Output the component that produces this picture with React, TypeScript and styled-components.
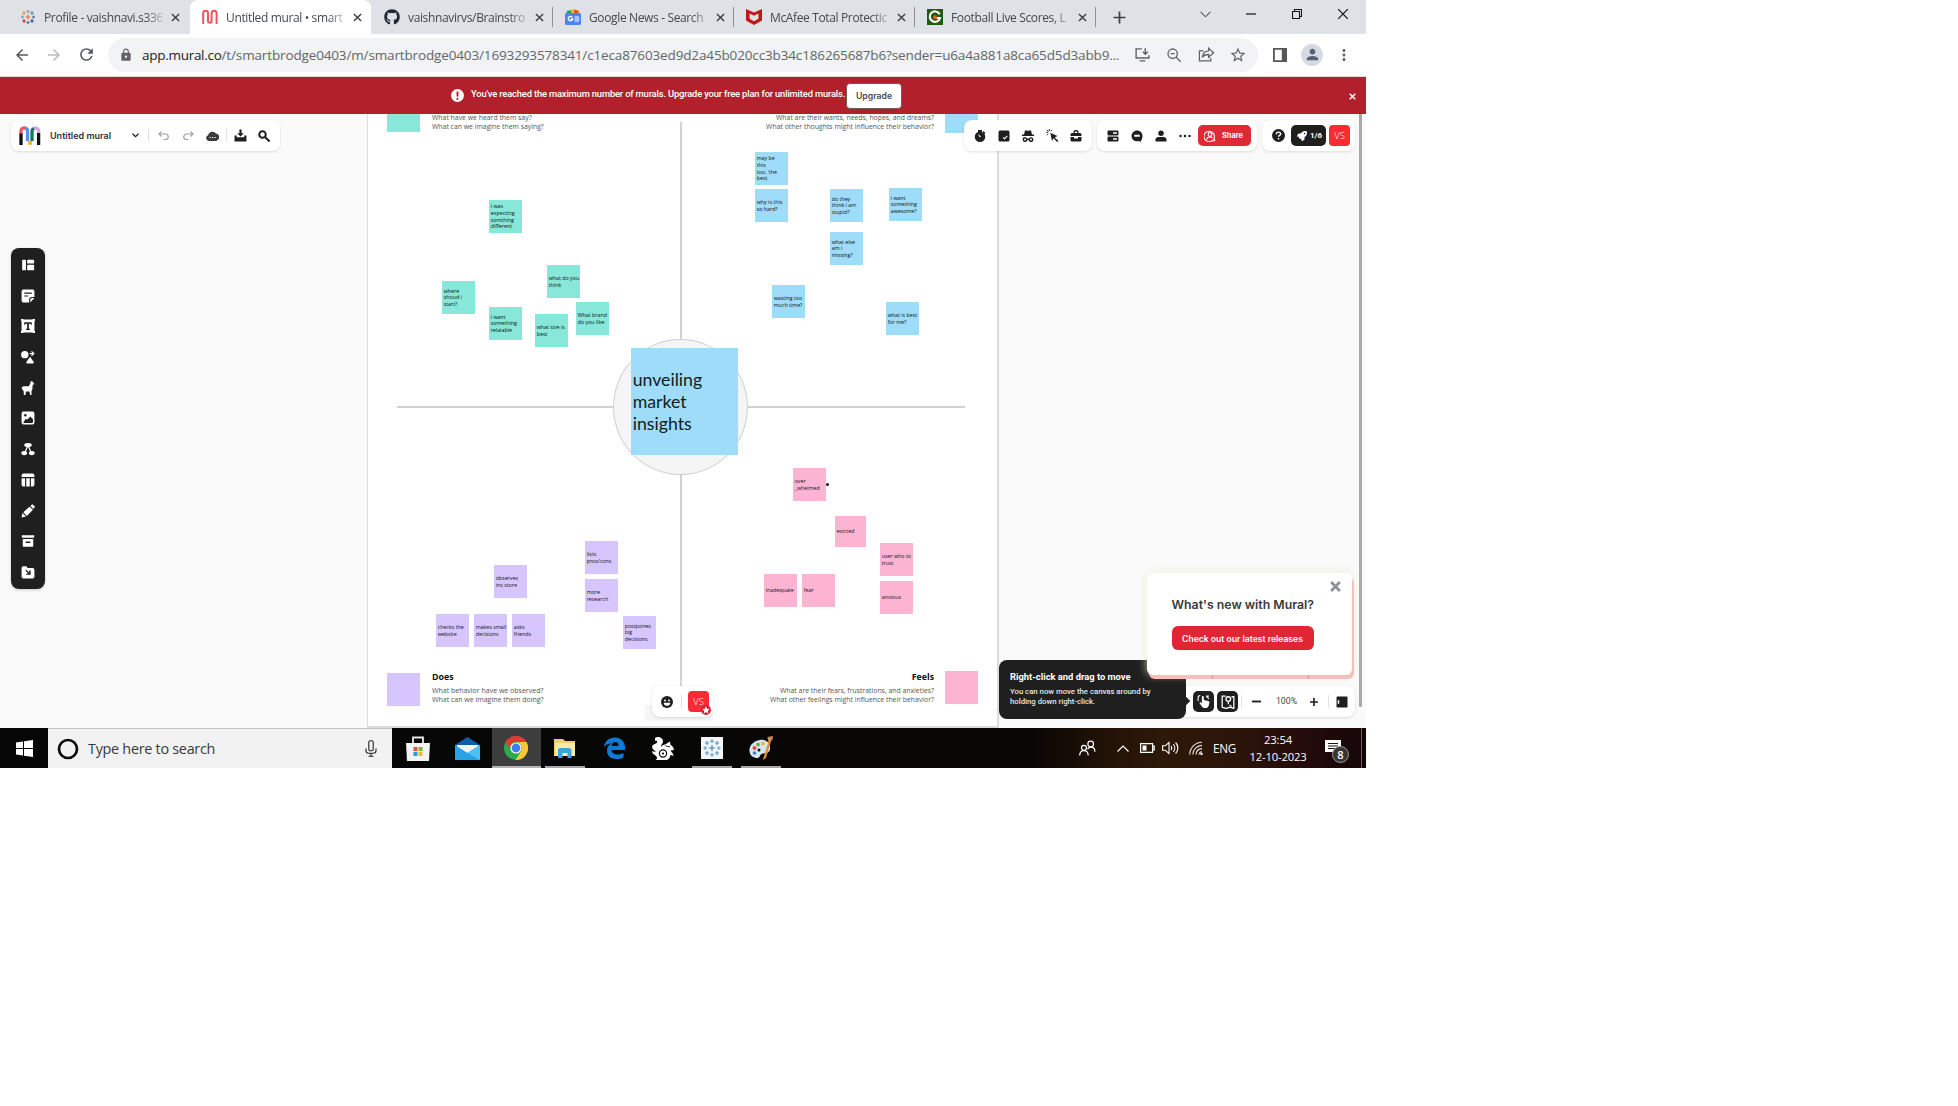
import React from 'react';
import styled, { createGlobalStyle, css } from 'styled-components';
import { FaGithub, FaRocket } from 'react-icons/fa';
import {
  MdLock, MdStarBorder, MdPerson, MdMoreVert, MdRefresh, MdArrowBack, MdArrowForward,
} from 'react-icons/md';

const CANVAS_TOP = 114;

const Global = createGlobalStyle`
  * { box-sizing: border-box; }
  body { margin: 0; background: #fff; }
  svg { display: block; flex: none; }
`;

const ui = css`font-family: "Open Sans", "Noto Sans", sans-serif;`;
const grotesk = css`font-family: Roboto, "Liberation Sans", sans-serif;`;
const inter = css`font-family: Inter, "Liberation Sans", sans-serif;`;

const Screen = styled.div`
  width: 1366px;
  height: 768px;
  display: flex;
  flex-direction: column;
  overflow: hidden;
  background: #fff;
  ${ui}
`;

/* ---------- browser chrome ---------- */
const TabStrip = styled.div`
  height: 34px;
  display: flex;
  padding-left: 8px;
  background: #dee1e6;
`;
const TabBox = styled.div<{ $active?: boolean; $line?: boolean }>`
  position: relative;
  width: 181px;
  display: flex;
  align-items: center;
  padding-left: 12px;
  border-radius: 8px 8px 0 0;
  background: ${p => (p.$active ? '#fff' : 'transparent')};
  &:first-child { width: 182px; }
  ${p => p.$active && css`margin-right: 1px;`}
  ${p => p.$line && css`
    &::after { content: ''; width: 1px; height: 20px; background: #8d9095; margin-left: auto; }
  `}
`;
const TabTitle = styled.div`
  width: 118px;
  margin-left: 8px;
  white-space: nowrap;
  font-size: 12px;
  line-height: 17px;
  letter-spacing: -0.36px;
  color: #45494d;
  mask-image: linear-gradient(90deg, #000 86%, rgba(0, 0, 0, 0.25) 100%);
`;
const TabClose = styled.div`
  width: 26px;
  display: flex;
  justify-content: center;
`;
const NewTab = styled.div`
  width: 46px;
  display: flex;
  align-items: center;
  justify-content: center;
`;
const WindowButtons = styled.div`
  margin-left: auto;
  display: flex;
  align-items: center;
  height: 28px;
`;
const WindowButton = styled.div`
  width: 46px;
  display: flex;
  justify-content: center;
`;
const AddressRow = styled.div`
  height: 43px;
  display: flex;
  align-items: center;
  padding: 0 0 1px 6px;
  background: #fff;
  border-bottom: 1px solid #e6d4d8;
  color: #5f6368;
`;
const NavButton = styled.div<{ $dim?: boolean }>`
  width: 32px;
  display: flex;
  justify-content: center;
  color: ${p => (p.$dim ? '#b9bbbe' : '#54585d')};
`;
const Omnibox = styled.div`
  flex: none;
  width: 1150px;
  height: 34px;
  margin-left: 6px;
  display: flex;
  align-items: center;
  padding-left: 11px;
  border-radius: 17px;
  background: #f1f3f4;
`;
const Url = styled.div`
  width: 984px;
  margin-left: 9px;
  white-space: nowrap;
  font-size: 13.5px;
  letter-spacing: -0.14px;
  color: #62666a;
  span { color: #222427; letter-spacing: -0.28px; }
`;
const OmniIcon = styled.div`
  width: 32px;
  display: flex;
  justify-content: center;
`;
const ChromeIcon = styled.div<{ $w: number }>`
  width: ${p => p.$w}px;
  display: flex;
  justify-content: center;
`;
const Avatar = styled.div`
  flex: none;
  width: 22px;
  height: 22px;
  display: flex;
  align-items: center;
  justify-content: center;
  border-radius: 50%;
  background: #d5d9e2;
  color: #56606f;
`;

/* ---------- banner ---------- */
const Banner = styled.div`
  position: relative;
  height: 37px;
  display: flex;
  align-items: center;
  padding-left: 451px;
  background: #b2212b;
  color: #fff;
`;
const BannerText = styled.div`
  width: 375px;
  margin: 0 0 4px 7px;
  white-space: nowrap;
  ${grotesk}
  font-size: 9.4px;
  font-weight: 500;
  letter-spacing: -0.17px;
`;
const UpgradeButton = styled.div`
  width: 56px;
  height: 26px;
  display: flex;
  align-items: center;
  justify-content: center;
  border: 1px solid #6e5c60;
  border-radius: 4px;
  background: #fff;
  color: #4a4a4c;
  ${inter}
  font-size: 8.7px;
  font-weight: 600;
`;
const BannerClose = styled.div`
  margin: 2px 10px 0 auto;
`;

/* ---------- canvas ---------- */
const Canvas = styled.div`
  position: relative;
  height: 614px;
  overflow: hidden;
  background: #fafafa;
`;
const Sheet = styled.div`
  position: absolute;
  left: 367px;
  top: -10px;
  width: 632px;
  height: 624px;
  background: #fff;
  border: 1px solid #dcdcdc;
  border-width: 0 2px 2px 1px;
`;
const Axis = styled.div<{ $x: number; $y: number; $w: number; $h: number }>`
  position: absolute;
  left: ${p => p.$x}px;
  top: ${p => p.$y - CANVAS_TOP}px;
  width: ${p => p.$w}px;
  height: ${p => p.$h}px;
  background: #d2d2d2;
`;
const Hub = styled.div`
  position: absolute;
  left: 613px;
  top: 225px;
  width: 135px;
  height: 136px;
  border: 1.5px solid #cfcfcf;
  border-radius: 50%;
  background: #f5f5f5;
`;
const tones = { green: '#87e7d8', blue: '#9fdcf9', pink: '#fcb4d2', purple: '#d7c6fd' };
type Tone = keyof typeof tones;
const Note = styled.div<{ $x: number; $y: number; $tone: Tone; $size?: number }>`
  position: absolute;
  left: ${p => p.$x}px;
  top: ${p => p.$y - CANVAS_TOP}px;
  width: ${p => p.$size ?? 33}px;
  height: ${p => p.$size ?? 33}px;
  display: flex;
  align-items: center;
  padding-left: 1.7px;
  background: ${p => tones[p.$tone]};
  color: #0c1215;
  font-family: "Open Sans", sans-serif;
  font-size: 5.3px;
  font-weight: 500;
  line-height: 6.6px;
  white-space: pre;
`;
const BigNote = styled(Note)`
  width: 107px;
  height: 107px;
  font-family: Lato, sans-serif;
  font-size: 17.7px;
  font-weight: 400;
  line-height: 22px;
  color: #101c22;
`;
const Dot = styled.div`
  position: absolute;
  left: 826px;
  top: 369px;
  width: 3px;
  height: 3px;
  border-radius: 50%;
  background: #111;
`;
const Legend = styled.div<{ $y: number; $left?: number; $right?: number; $size?: number }>`
  position: absolute;
  top: ${p => p.$y - CANVAS_TOP}px;
  ${p => (p.$right !== undefined ? `right: ${p.$right}px; text-align: right;` : `left: ${p.$left}px;`)}
  white-space: nowrap;
  font-size: ${p => p.$size ?? 6.88}px;
  line-height: 8.9px;
  color: #555;
`;
const LegendTitle = styled.div`
  margin-bottom: 4px;
  font-family: "Open Sans", sans-serif;
  font-size: 8.8px;
  font-weight: 700;
  line-height: 12px;
  color: #111;
`;
const Scrollbar = styled.div`
  position: absolute;
  left: 1359px;
  top: 0;
  width: 3px;
  height: 593px;
  border-radius: 0 0 2px 2px;
  background: #a9a9a9;
`;

/* ---------- floating panels ---------- */
const Pill = styled.div<{ $x: number; $y: number; $w: number }>`
  position: absolute;
  left: ${p => p.$x}px;
  top: ${p => p.$y - CANVAS_TOP}px;
  width: ${p => p.$w}px;
  height: 31px;
  display: flex;
  align-items: center;
  border-radius: 8px;
  background: #fff;
  box-shadow: 0 1px 3px rgba(0, 0, 0, 0.12);
  color: #1f1f1f;
`;
const Slot = styled.div<{ $w: number; $dim?: boolean }>`
  width: ${p => p.$w}px;
  display: flex;
  justify-content: center;
  color: ${p => (p.$dim ? '#a3a3a3' : 'inherit')};
`;
const Rule = styled.div`
  width: 1px;
  height: 13px;
  background: #e0e0e0;
`;
const MuralName = styled.div`
  width: 82px;
  margin-left: 2px;
  ${inter}
  font-size: 9px;
  font-weight: 600;
  color: #333;
  white-space: nowrap;
`;
const ShareButton = styled.div`
  width: 53px;
  height: 21px;
  display: flex;
  align-items: center;
  gap: 6px;
  padding-left: 6px;
  border-radius: 5px;
  background: #df2935;
  color: #fff;
  ${inter}
  font-size: 7.4px;
  font-weight: 700;
`;
const RocketButton = styled.div`
  width: 35px;
  height: 21px;
  margin-left: 1px;
  display: flex;
  align-items: center;
  gap: 3px;
  padding-left: 6px;
  border-radius: 5px;
  background: #1f1f1f;
  color: #fff;
  ${grotesk}
  font-size: 8px;
  font-weight: 700;
`;
const UserBadge = styled.div`
  position: relative;
  width: 21px;
  height: 21px;
  margin-left: 3px;
  display: flex;
  align-items: center;
  justify-content: center;
  border-radius: 4px;
  background: #fb2a34;
  color: #fff;
  font-size: 9.3px;
  font-weight: 300;
`;
const StarBadge = styled.div`
  position: absolute;
  right: -2px;
  bottom: -3px;
`;
const SideBar = styled.div`
  position: absolute;
  left: 11px;
  top: 134px;
  width: 34px;
  height: 341px;
  display: flex;
  flex-direction: column;
  align-items: center;
  justify-content: space-between;
  padding: 10px 0 10px;
  border-radius: 8px;
  background: #1f1f1f;
  color: #fff;
  box-shadow: 0 1px 3px rgba(0, 0, 0, 0.2);
`;
const DarkButton = styled.div`
  width: 21px;
  height: 21px;
  margin-right: 3px;
  display: flex;
  align-items: center;
  justify-content: center;
  border-radius: 5px;
  background: #1f1f1f;
  color: #fff;
`;
const Zoom = styled.div`
  width: 33px;
  text-align: center;
  ${grotesk}
  font-size: 8.7px;
  color: #444;
  margin-bottom: 2px;
`;
const Shade = styled.div`
  position: absolute;
  left: 645px;
  top: 591px;
  width: 68px;
  height: 16px;
  background: #f5f5f5;
`;
const Tip = styled.div`
  position: absolute;
  left: 999px;
  top: 546px;
  width: 187px;
  height: 59px;
  padding: 11px 0 0 11px;
  border-radius: 8px;
  background: #1f1f1f;
  color: #e6e6e6;
  ${grotesk}
  font-size: 7.75px;
  font-weight: 500;
  line-height: 10px;
  white-space: pre;
  &::after {
    content: '';
    position: absolute;
    right: -3px;
    top: 38px;
    width: 6px;
    height: 6px;
    background: #1f1f1f;
    transform: rotate(45deg);
  }
`;
const TipTitle = styled.div`
  margin-bottom: 4px;
  font-size: 9.35px;
  font-weight: 700;
  line-height: 12px;
  color: #fff;
`;
const News = styled.div`
  position: absolute;
  left: 1147px;
  top: 459px;
  width: 205px;
  height: 102px;
  display: flex;
  flex-direction: column;
  padding: 23px 0 0 24.5px;
  border-radius: 6px;
  background: #fff;
  box-shadow: 2px 4px 0 #f5c0bb, 0 0 9px rgba(235, 238, 205, 0.8);
`;
const NewsTick = styled.div<{ $x: number }>`
  position: absolute;
  left: ${p => p.$x}px;
  bottom: -4px;
  width: 1px;
  height: 4px;
  background: #cf9a97;
`;
const NewsTitle = styled.div`
  ${inter}
  font-size: 12.3px;
  font-weight: 600;
  line-height: 18px;
  color: #3a3a3c;
  white-space: nowrap;
`;
const NewsButton = styled.div`
  width: 142px;
  height: 24px;
  margin-top: 12px;
  padding-top: 1px;
  display: flex;
  align-items: center;
  justify-content: center;
  border-radius: 6px;
  background: #e02635;
  color: #fff;
  ${inter}
  font-size: 8.6px;
  font-weight: 600;
  white-space: nowrap;
`;
const NewsClose = styled.div`
  position: absolute;
  right: 11px;
  top: 8px;
`;

/* ---------- taskbar ---------- */
const Taskbar = styled.div`
  height: 40px;
  display: flex;
  background: linear-gradient(90deg, #060606 0, #080706 1030px, #1d0f05 1090px, #2e1908 1160px, #2a1409 1240px, #250b0b 1300px, #140607 1366px);
  color: #fff;
`;
const Start = styled.div`
  width: 48px;
  display: flex;
  align-items: center;
  justify-content: center;
`;
const Search = styled.div`
  width: 344px;
  display: flex;
  align-items: center;
  padding: 0 15px 0 9px;
  border-top: 1px solid #c4c4c4;
  background: #f2f2f2;
  color: #3a3a3a;
  font-size: 14.4px;
  letter-spacing: -0.28px;
`;
const SearchText = styled.div`
  flex: 1;
  margin-left: 9px;
`;
const TaskButton = styled.div<{ $active?: boolean; $running?: boolean }>`
  width: 49px;
  display: flex;
  align-items: center;
  justify-content: center;
  background: ${p => (p.$active ? '#3d3d3d' : 'transparent')};
  box-shadow: ${p => (p.$active ? 'inset 0 -2px #b5b5b5' : 'none')};
  ${p => p.$running && css`
    background: linear-gradient(#a9a9a9, #a9a9a9) center bottom / 40px 2px no-repeat;
  `}
`;
const Apps = styled.div`
  display: flex;
  margin-left: 1.5px;
`;
const Tray = styled.div`
  margin-left: auto;
  display: flex;
  align-items: center;
`;
const TrayCell = styled.div<{ $w: number }>`
  width: ${p => p.$w}px;
  display: flex;
  justify-content: center;
  font-size: 11.7px;
  letter-spacing: -0.2px;
`;
const Clock = styled.div`
  width: 72px;
  text-align: center;
  font-size: 11.3px;
  line-height: 17.5px;
  letter-spacing: -0.2px;
`;
const Notifications = styled.div`
  position: relative;
  width: 38px;
  display: flex;
  justify-content: center;
`;
const Count = styled.div`
  position: absolute;
  left: 18px;
  top: 6px;
  width: 17px;
  height: 17px;
  display: flex;
  align-items: center;
  justify-content: center;
  border: 1px solid #9b9b9b;
  border-radius: 50%;
  background: #3b3435;
  font-size: 11px;
  font-weight: 600;
`;
const Peek = styled.div`
  width: 5px;
  height: 40px;
  margin-left: 9px;
  border-left: 1px solid #6d5f5f;
`;

/* ---------- drawings ---------- */
type IconProps = { s?: number; children: React.ReactNode; stroke?: number };
const Solid = ({ s = 14, children }: IconProps) => (
  <svg width={s} height={s} viewBox="0 0 24 24" fill="currentColor">{children}</svg>
);
const Line = ({ s = 14, stroke = 2, children }: IconProps) => (
  <svg width={s} height={s} viewBox="0 0 24 24" fill="none" stroke="currentColor" strokeWidth={stroke}>{children}</svg>
);
const Cross = ({ s, stroke, color }: { s: number; stroke: number; color: string }) => (
  <svg width={s} height={s} viewBox="0 0 10 10" fill="none" stroke={color} strokeWidth={stroke}><path d="M1 1l8 8M9 1l-8 8" /></svg>
);

const crossAt = (x: number, y: number, r: number, c: string) => (
  <path key={`${x}-${y}`} d={`M${x - r} ${y}h${r * 2}M${x} ${y - r}v${r * 2}`} stroke={c} />
);
const Tableau = ({ s = 16 }: { s?: number }) => (
  <svg width={s} height={s} viewBox="0 0 32 32" fill="none" strokeWidth={s > 18 ? 1.8 : 2.4}>
    {crossAt(16, 16, 5, s > 18 ? '#4a86b0' : '#e8762c')}
    {crossAt(16, 5, 3, s > 18 ? '#6d9fc2' : '#7a9bb0')}
    {crossAt(16, 27, 3, s > 18 ? '#6d9fc2' : '#5b6591')}
    {crossAt(5, 16, 3, '#6b9cba')}
    {crossAt(27, 16, 3, s > 18 ? '#6d9fc2' : '#5b6591')}
    {crossAt(8, 8, 3.4, s > 18 ? '#5f95ba' : '#eb912c')}
    {crossAt(24, 8, 3.4, s > 18 ? '#5f95ba' : '#59879b')}
    {crossAt(8, 24, 3.4, s > 18 ? '#5f95ba' : '#c72037')}
    {crossAt(24, 24, 3.4, s > 18 ? '#5f95ba' : '#1f447e')}
  </svg>
);
const MuralFavicon = () => (
  <svg width="16" height="16" viewBox="0 0 16 16" fill="none" stroke="#f0545c" strokeWidth="2">
    <path d="M1.2 15V4.2a2.400 2.400 0 0 1 4.800 0V12a1.700 1.700 0 0 0 3.600 0V4.200a2.500 2.500 0 0 1 5 0V15" />
  </svg>
);
const MuralLogo = () => (
  <svg width="22" height="19" viewBox="0 0 22 19" fill="none" strokeWidth="3.3">
    <path d="M2 19V7" stroke="#111" />
    <path d="M2 7.500V5.500a3.200 3.200 0 0 1 4.800-3.200" stroke="#f3545c" />
    <path d="M6 2.200a3 3 0 0 1 2.500 3.300V15" stroke="#5b8def" />
    <path d="M9 16.800h4" stroke="#fbb42c" strokeWidth="4" />
    <path d="M13 15V5.500a3.500 3.500 0 0 1 2.400-3.300" stroke="#0c7a5c" />
    <path d="M14.800 2.300a3.200 3.200 0 0 1 4.800 3.200v2" stroke="#e79bf0" />
    <path d="M19.600 7v12" stroke="#111" />
  </svg>
);
const NewsFavicon = () => (
  <svg width="16" height="16" viewBox="0 0 16 16">
    <path d="M1.5 2l8-1.6 1 4H2z" fill="#2e9d57" /><path d="M6 .8l8 .6-.6 4H6z" fill="#f1b72b" /><path d="M9.6 .6l4 1.3-.5 2.6H9z" fill="#dc4a3d" />
    <rect y="4" width="16" height="12" rx="1.2" fill="#4a86ee" />
    <path d="M7.200 8.200A2.200 2.200 0 1 0 7.600 10H5.600" fill="none" stroke="#fff" strokeWidth="1.300" />
    <path d="M9.500 8h4.500M9.500 10h5M9.500 12h4.500" stroke="#fff" strokeWidth="1.100" />
  </svg>
);
const McAfeeFavicon = () => (
  <svg width="16" height="16" viewBox="0 0 16 16">
    <path d="M0 0l8 3.4L16 0v11.6L8 16l-8-4.4z" fill="#c01818" />
    <path d="M3.6 4.6L8 6.8l4.4-2.2v5.2L8 12.2 3.6 9.8z" fill="#dee1e6" />
  </svg>
);
const GoalFavicon = () => (
  <svg width="16" height="16" viewBox="0 0 16 16">
    <rect width="16" height="16" fill="#1f5c10" />
    <path d="M12.600 5.200A5.200 5.200 0 1 0 13 9H9.400" fill="none" stroke="#fff" strokeWidth="2.200" />
    <circle cx="8" cy="8.200" r="2" fill="#e5601d" />
  </svg>
);

const tabs: { icon: React.ReactNode; title: string; active?: boolean; line?: boolean }[] = [
  { icon: <Tableau />, title: 'Profile - vaishnavi.s336' },
  { icon: <MuralFavicon />, title: 'Untitled mural • smart', active: true },
  { icon: <FaGithub size={16} color="#24292f" />, title: 'vaishnavirvs/Brainstro', line: true },
  { icon: <NewsFavicon />, title: 'Google News - Search', line: true },
  { icon: <McAfeeFavicon />, title: 'McAfee Total Protectic', line: true },
  { icon: <GoalFavicon />, title: 'Football Live Scores, L', line: true },
];

const notes: [number, number, Tone, string, number?][] = [
  [387, 99, 'green', ''],
  [945, 100, 'blue', ''],
  [387, 673, 'purple', ''],
  [945, 671, 'pink', ''],
  [489, 200, 'green', 'i was\nexpecting\nsomthing\ndifferent'],
  [442, 281, 'green', 'where\nshoud i\nstart?'],
  [547, 265, 'green', 'what do you\nthink'],
  [489, 307, 'green', 'i want\nsomething\nrelaiable'],
  [535, 314, 'green', 'what size is\nbest'],
  [576, 302, 'green', 'What brand\ndo you like'],
  [755, 152, 'blue', "may be\nthis\ntoo, 'the\nbest"],
  [755, 189, 'blue', 'why is this\nso hard?'],
  [830, 189, 'blue', 'do they\nthink i am\nstupid?'],
  [889, 188, 'blue', 'i want\nsomething\nawesome?'],
  [830, 232, 'blue', 'what else\nam i\nmissing?'],
  [772, 285, 'blue', 'wasting too\nmuch time?'],
  [886, 302, 'blue', 'what is best\nfor me?'],
  [793, 468, 'pink', 'over\n_whelmed'],
  [835, 516, 'pink', 'exicted', 31],
  [880, 543, 'pink', 'user who to\ntrust'],
  [880, 581, 'pink', 'anxious'],
  [764, 574, 'pink', 'inadequate'],
  [802, 574, 'pink', 'fear'],
  [585, 541, 'purple', 'lists\npros/cons'],
  [585, 579, 'purple', 'more\nresearch'],
  [494, 565, 'purple', 'observes\nins store'],
  [436, 614, 'purple', 'checks the\nwebsite'],
  [474, 614, 'purple', 'makes small\ndecisions'],
  [512, 614, 'purple', 'asks\nfriends'],
  [623, 616, 'purple', 'postpones\nbig\ndecisions'],
];

const sideIcons: React.ReactNode[] = [
  <><rect x="2" y="3" width="6.5" height="18" rx="1.5" /><rect x="10.5" y="3" width="12" height="6.5" rx="1.5" /><rect x="10.5" y="11.5" width="12" height="9.5" rx="1.5" /></>,
  <path fillRule="evenodd" d="M4 1h16a3 3 0 0 1 3 3v9.500h-4.500a4.500 4.500 0 0 0-4.500 4.500v5H4a3 3 0 0 1-3-3V4a3 3 0 0 1 3-3zM5.500 6v2h13V6zM5.500 11v2h7v-2zM23 15.500L16 23v-4.500a3 3 0 0 1 3-3z" />,
  <><path d="M0 0h4v1h16V0h4v4h-1v16h1v4h-4v-1H4v1H0v-4h1V4H0z" /><path d="M5.500 5.500h13V10h-2V8H13.500v8.500h2v2.200h-7v-2.200h2V8H7.500v2h-2z" fill="#1f1f1f" /></>,
  <><circle cx="6.500" cy="8" r="6.300" /><path d="M15.500 11.500l6 8.500c1 1.500.3 3-1 3h-10c-1.400 0-2-1.500-1-3z" /><path d="M15 5.200h4.500L17.300 3l1.400-1.400L23.500 6.200l-4.800 4.700-1.400-1.400 2.200-2.200H15z" /></>,
  <path d="M17 -1l1.200 2L20.500 1v2l2 .8v2h-2.500L19.500 14l-1.500 3v8h-2.200l-1.300-7H8.500L7.500 25H5l-.5-8-2.500-3L1 11l3-2h9.500L16 4z" />,
  <path fillRule="evenodd" d="M4 1h16a3 3 0 0 1 3 3v16a3 3 0 0 1-3 3H4a3 3 0 0 1-3-3V4a3 3 0 0 1 3-3zM7.500 5a2.300 2.300 0 1 0 0 4.600 2.300 2.300 0 0 0 0-4.600zM4 19.500c0 1 .5 1 1 1h14c1 0 1.500-.4 1.500-1.500V14l-4.500-4.500-5.500 5.300-2-1.800z" />,
  <><ellipse cx="12" cy="5.200" rx="6.500" ry="3.700" /><ellipse cx="5.500" cy="19" rx="5" ry="3.500" /><ellipse cx="18.500" cy="19" rx="5" ry="3.500" /><path d="M11 8l-4 9M13 8l4 9" stroke="currentColor" strokeWidth="2" /></>,
  <path d="M1 7V4a3 3 0 0 1 3-3h16a3 3 0 0 1 3 3v3zM1 9h6v14H4a3 3 0 0 1-3-3zM9 9h6v14H9zM17 9h6v11a3 3 0 0 1-3 3h-3z" />,
  <path d="M1 23l1.500-7.500 6 6zM4 14l10.500-9.500 6 5.500L10 20.500zM16 3.500l2-2c1-1 2-1 3 0l2 2c1 1 .8 2 0 2.800l-2 2z" />,
  <path fillRule="evenodd" d="M1.500 2h21v4.500h-21zM3 8.500h18V20a2 2 0 0 1-2 2H5a2 2 0 0 1-2-2zM8 13v2.500h8V13z" />,
  <path fillRule="evenodd" d="M1 5a3 3 0 0 1 3-3h5l2.500 3H20a3 3 0 0 1 3 3v12a3 3 0 0 1-3 3H4a3 3 0 0 1-3-3zM9 8L7.500 9.500l5 5H9v2.300h7.500V9.500H14v3.300z" />,
];

const SearchBarIcons = () => (
  <>
    <OmniIcon><Line s={17}><path d="M11 4H3v13h18v-4M8 21h8M16 3v8M12.500 8l3.500 3.500L19.500 8" /></Line></OmniIcon>
    <OmniIcon><Line s={16}><circle cx="10" cy="10" r="7" /><path d="M15 15l7 7M7 10h6" /></Line></OmniIcon>
    <OmniIcon><Line s={17} stroke={1.8}><path d="M8 7H2v14h16v-4M15 3l7 6.500-7 6.500v-4c-4 0-7 .8-9 4 .5-5 4-8.500 9-9z" /></Line></OmniIcon>
    <OmniIcon><MdStarBorder size={18} /></OmniIcon>
  </>
);

export default function App() {
  return (
    <Screen>
      <Global />
      <TabStrip>
        {tabs.map(t => (
          <TabBox key={t.title} $active={t.active} $line={t.line}>
            {t.icon}
            <TabTitle>{t.title}</TabTitle>
            <TabClose><Cross s={9} stroke={1.6} color="#3c4043" /></TabClose>
          </TabBox>
        ))}
        <NewTab><Line s={13} stroke={3.2}><path d="M12 1v22M1 12h22" stroke="#3c4043" /></Line></NewTab>
        <WindowButtons>
          <WindowButton><svg width="11" height="7" viewBox="0 0 11 7" fill="none" stroke="#222"><path d="M.5 .8l5 5 5-5" /></svg></WindowButton>
          <WindowButton><svg width="10" height="2" viewBox="0 0 10 2"><path d="M0 1h10" stroke="#111" strokeWidth="1.2" /></svg></WindowButton>
          <WindowButton><svg width="10" height="10" viewBox="0 0 10 10" fill="none" stroke="#111" strokeWidth="1.1"><path d="M.5 2.500h7v7h-7zM2.500 2.500v-2h7v7h-2" /></svg></WindowButton>
          <WindowButton><Cross s={12} stroke={1} color="#111" /></WindowButton>
        </WindowButtons>
      </TabStrip>

      <AddressRow>
        <NavButton><MdArrowBack size={18} /></NavButton>
        <NavButton $dim><MdArrowForward size={18} /></NavButton>
        <NavButton><MdRefresh size={19} /></NavButton>
        <Omnibox>
          <MdLock size={14} />
          <Url>
            <span>app.mural.co</span>/t/smartbrodge0403/m/smartbrodge0403/1693293578341/c1eca87603ed9d2a45b020cc3b34c186265687b6?sender=u6a4a881a8ca65d5d3abb9...
          </Url>
          <SearchBarIcons />
        </Omnibox>
        <ChromeIcon $w={44}>
          <svg width="14" height="14" viewBox="0 0 14 14"><path fillRule="evenodd" d="M0 0h14v14H0zM1.800 1.800v10.400h7V1.800z" fill="#54585d" /></svg>
        </ChromeIcon>
        <ChromeIcon $w={20}><Avatar><MdPerson size={17} /></Avatar></ChromeIcon>
        <ChromeIcon $w={44}><MdMoreVert size={18} /></ChromeIcon>
      </AddressRow>

      <Banner>
        <svg width="13" height="13" viewBox="0 0 13 13"><circle cx="6.500" cy="6.500" r="6.500" fill="#fff" /><path d="M6.500 2.500v5" stroke="#b2212b" strokeWidth="1.900" /><circle cx="6.500" cy="9.800" r="1.100" fill="#b2212b" /></svg>
        <BannerText>You've reached the maximum number of murals. Upgrade your free plan for unlimited murals.</BannerText>
        <UpgradeButton>Upgrade</UpgradeButton>
        <BannerClose><Cross s={7} stroke={2} color="#fff" /></BannerClose>
      </Banner>

      <Canvas>
        <Sheet />
        <Axis $x={679.5} $y={122} $w={2} $h={570} />
        <Axis $x={397} $y={406} $w={568} $h={2} />
        <Hub />
        {notes.map(([x, y, tone, text, size]) => (
          <Note key={`${x}-${y}`} $x={x} $y={y} $tone={tone} $size={size}>{text}</Note>
        ))}
        <BigNote $x={631} $y={348} $tone="blue">{'unveiling\nmarket\ninsights'}</BigNote>
        <Dot />
        <Legend $left={432} $y={114}>What have we heard them say?<br />What can we imagine them saying?</Legend>
        <Legend $right={432} $y={114}>What are their wants, needs, hopes, and dreams?<br />What other thoughts might influence their behavior?</Legend>
        <Legend $left={432} $y={671} $size={7}><LegendTitle>Does</LegendTitle>What behavior have we observed?<br />What can we imagine them doing?</Legend>
        <Legend $right={432} $y={671}><LegendTitle>Feels</LegendTitle>What are their fears, frustrations, and anxieties?<br />What other feelings might influence their behavior?</Legend>
        <Scrollbar />

        <Pill $x={11} $y={120} $w={269}>
          <Slot $w={37}><MuralLogo /></Slot>
          <MuralName>Untitled mural</MuralName>
          <svg width="7" height="5" viewBox="0 0 7 5" fill="none" stroke="#222" strokeWidth="1.300"><path d="M.5 .7l3 3 3-3" /></svg>
          <Slot $w={18}><Rule /></Slot>
          <Slot $w={14} $dim><Line s={12} stroke={2.400}><path d="M2 8h13a5.500 5.500 0 0 1 0 11h-4M7 3L2 8l5 5" /></Line></Slot>
          <Slot $w={34} $dim><Line s={12} stroke={2.400}><path d="M22 8H9a5.500 5.500 0 0 0 0 11h4M17 3l5 5-5 5" /></Line></Slot>
          <Slot $w={15}>
            <svg width="13" height="10" viewBox="0 0 26 20"><path d="M6 20a6 6 0 0 1-2-11.500A9 9 0 0 1 20 5a7 7 0 0 1 3 13l-2 2z" fill="#3a3a3a" /><path d="M7 13h2.500M12 13h2.500M17 13h2.500" stroke="#fff" strokeWidth="2.200" /></svg>
          </Slot>
          <Slot $w={12}><Rule /></Slot>
          <Slot $w={16}>
            <Solid s={13}><path d="M10 1h4v7h4l-6 6-6-6h4zM1 12h4v3h14v-3h4v11H1z" /></Solid>
          </Slot>
          <Slot $w={31}>
            <Line s={12} stroke={4}><circle cx="9" cy="9" r="6.500" /><path d="M14 14l9 9" /></Line>
          </Slot>
        </Pill>

        <Pill $x={964} $y={120} $w={128}>
          <Slot $w={4} />
          <Slot $w={24}><Solid s={12}><path fillRule="evenodd" d="M12 3a10.500 10.500 0 1 1 0 21 10.500 10.500 0 0 1 0-21zM8 8l3 6.500 3-1.500z" /><path d="M8 0h8v4H8zM19 2l4 4-2 2-4-4z" /></Solid></Slot>
          <Slot $w={24}><Solid s={12}><path fillRule="evenodd" d="M4 1h16a3 3 0 0 1 3 3v16a3 3 0 0 1-3 3H4a3 3 0 0 1-3-3V4a3 3 0 0 1 3-3zM18 11l-5 5-2-2-1.500 1.500 3.500 3.500 6.500-6.500z" /></Solid></Slot>
          <Slot $w={24}><Solid s={12}><path d="M6 1h4l2 1 2-1h4l2 8h4v3H0V9h4zM6 14a5 5 0 0 1 4.500 3h3A5 5 0 1 1 13 20h-2a5 5 0 1 1-5-6z" /><circle cx="6" cy="19" r="2" fill="#fff" /><circle cx="18" cy="19" r="2" fill="#fff" /></Solid></Slot>
          <Slot $w={24}><Solid s={13}><path d="M8 7l13 6-5 2.500 7 6.500-2.500 2-6.500-7-3 5z" /><path d="M6 0v4M0 6h4M1.500 1.500l3 3M11 1.500l-2 2.500M1.500 11l2.500-2" stroke="currentColor" strokeWidth="1.700" /></Solid></Slot>
          <Slot $w={24}><Solid s={12}><path fillRule="evenodd" d="M7 6V4a4 4 0 0 1 4-4h2a4 4 0 0 1 4 4v2h3a3 3 0 0 1 3 3v3H1V9a3 3 0 0 1 3-3zM9.500 6h5V4.500c0-1-.5-1.500-1.500-1.500h-2c-1 0-1.500.5-1.500 1.500zM1 14h7v3h8v-3h7v6a3 3 0 0 1-3 3H4a3 3 0 0 1-3-3z" /></Solid></Slot>
        </Pill>

        <Pill $x={1097} $y={120} $w={160}>
          <Slot $w={4} />
          <Slot $w={24}><Solid s={12}><path fillRule="evenodd" d="M3 1h18a2 2 0 0 1 2 2v6a2 2 0 0 1-2 2H3a2 2 0 0 1-2-2V3a2 2 0 0 1 2-2zM12 4.500v3h8v-3zM3 13h18a2 2 0 0 1 2 2v6a2 2 0 0 1-2 2H3a2 2 0 0 1-2-2v-6a2 2 0 0 1 2-2zM12 16.500v3h8v-3z" /></Solid></Slot>
          <Slot $w={24}><Solid s={12}><path fillRule="evenodd" d="M12 1c6 0 11 4.500 11 10.500S20 22 20 22v2l-4-2c-1 .3-2.500.5-4 .5C6 22.500 1 18 1 12S6 1 12 1zM6.500 9.500v4h11v-4z" /></Solid></Slot>
          <Slot $w={24}><Solid s={12}><circle cx="12" cy="6.500" r="5.500" /><path d="M1 23v-4c0-3 3-5 6-5h10c3 0 6 2 6 5v4z" /></Solid></Slot>
          <Slot $w={24}><Solid s={12}><circle cx="3" cy="12" r="2.500" /><circle cx="12" cy="12" r="2.500" /><circle cx="21" cy="12" r="2.500" /></Solid></Slot>
          <Slot $w={1} />
          <ShareButton>
            <Line s={12} stroke={2.200}><path d="M20 17a10.500 10.500 0 1 0-3 4M5 19c1-4 4-5 7-5s4 .5 5 2M20 17v6M17 20h6" /><circle cx="12" cy="9" r="3.800" /></Line>
            Share
          </ShareButton>
        </Pill>

        <Pill $x={1262} $y={120} $w={93}>
          <Slot $w={4} />
          <Slot $w={24}>
            <Solid s={13}><circle cx="12" cy="12" r="12" /><path d="M8 9.500C8 7 10 5.800 12 5.800s4 1.200 4 3.400c0 2.500-4 2.600-4 5.300M12 16.500v3" stroke="#fff" strokeWidth="2.600" fill="none" /></Solid>
          </Slot>
          <RocketButton><FaRocket size={10} />1/6</RocketButton>
          <UserBadge>VS</UserBadge>
        </Pill>

        <SideBar>
          {sideIcons.map((icon, i) => <Solid key={i} s={14}>{icon}</Solid>)}
        </SideBar>

        <Shade />
        <Pill $x={652} $y={686} $w={61}>
          <Slot $w={29}>
            <Solid s={12}><circle cx="12" cy="12" r="12" /><circle cx="8" cy="9" r="1.900" fill="#fff" /><circle cx="16" cy="9" r="1.900" fill="#fff" /><path d="M5.500 13.500h13a6.500 6 0 0 1-13 0z" fill="#fff" /></Solid>
          </Slot>
          <Rule />
          <Slot $w={3} />
          <UserBadge>
            VS
            <StarBadge>
              <svg width="10" height="10" viewBox="0 0 24 24"><circle cx="12" cy="12" r="12" fill="#d9202e" /><path d="M12 3l2.700 6 6.300.6-4.800 4.300 1.400 6.300L12 17l-5.600 3.200 1.400-6.300L3 9.600 9.300 9z" fill="#fff" /></svg>
            </StarBadge>
          </UserBadge>
        </Pill>

        <Pill $x={1180} $y={686} $w={175}>
          <Slot $w={13} />
          <DarkButton><Solid s={13}><path fillRule="evenodd" d="M9 9V3.500a1.700 1.700 0 0 1 3.500 0V9l8 2c1.500.5 2.500 1.500 2.500 3l-1.500 6c-.5 2-2 4-4.500 4h-3c-2 0-3-.8-4-2l-5-6.500c-1-1.500 1-3 2.500-1.500L9 15.500z" /><path d="M2 11V5a4 4 0 0 1 4-4M17 2h5M17 2l5 5" stroke="currentColor" strokeWidth="2" fill="none" /></Solid></DarkButton>
          <DarkButton><Line s={14} stroke={2.200}><path d="M8 2H2v19l7 2 6-2 7 2V3h-4" /><circle cx="12.500" cy="7" r="4" /><path d="M12.500 11v5M15 17l3 3" /></Line></DarkButton>
          <Rule />
          <Slot $w={28}><Line s={9} stroke={5}><path d="M0 12h24" /></Line></Slot>
          <Zoom>100%</Zoom>
          <Slot $w={22}><Line s={8} stroke={5}><path d="M0 12h24M12 0v24" /></Line></Slot>
          <Slot $w={3} />
          <Rule />
          <Slot $w={26}><Solid s={12}><path fillRule="evenodd" d="M3 1h18a2 2 0 0 1 2 2v18a2 2 0 0 1-2 2H3a2 2 0 0 1-2-2V3a2 2 0 0 1 2-2zM3.500 8v8l3-1V9z" /></Solid></Slot>
        </Pill>

        <Tip>
          <TipTitle>Right-click and drag to move</TipTitle>
          {'You can now move the canvas around by\nholding down right-click.'}
        </Tip>
        <News>
          <NewsClose><Cross s={11} stroke={2.600} color="#8f9297" /></NewsClose>
          <NewsTitle>What's new with Mural?</NewsTitle>
          <NewsButton>Check out our latest releases</NewsButton>
          <NewsTick $x={65} />
          <NewsTick $x={161} />
        </News>
      </Canvas>

      <Taskbar>
        <Start>
          <svg width="17" height="17" viewBox="0 0 17 17" fill="#fff"><path d="M0 2.500l7-1V8H0zM8 1.300L17 0v8H8zM0 9h7v6.500l-7-1zM8 9h9v8l-9-1.300z" /></svg>
        </Start>
        <Search>
          <svg width="22" height="22" viewBox="0 0 22 22" fill="none" stroke="#0c0c0c" strokeWidth="2.700"><circle cx="11" cy="11" r="9" /></svg>
          <SearchText>Type here to search</SearchText>
          <svg width="12" height="17" viewBox="0 0 12 17" fill="none" stroke="#222" strokeWidth="1.100"><rect x="3.800" y=".8" width="4.400" height="10" rx="1.500" /><path d="M1 8.500v2.200c0 1.500 1 2.500 2.500 2.500h5c1.500 0 2.500-1 2.500-2.500V8.500M6 13.200V16M3.500 16.200h5" /></svg>
        </Search>
        <Apps>
          <TaskButton>
            <svg width="24" height="25" viewBox="0 0 24 25"><path d="M7 8V1.500h10V8" fill="none" stroke="#e8e8e8" strokeWidth="1.800" /><path d="M0 7h24l-1 18H1z" fill="#f3f3f3" /><path d="M7.500 11h4v4h-4z" fill="#e4572e" /><path d="M12.500 11h4v4h-4z" fill="#7db72f" /><path d="M7.500 16h4v4h-4z" fill="#1c9fe0" /><path d="M12.500 16h4v4h-4z" fill="#f5b824" /></svg>
          </TaskButton>
          <TaskButton>
            <svg width="25" height="23" viewBox="0 0 25 23"><path d="M0 8L12.500 0 25 8v2H0z" fill="#0f5ea8" /><path d="M2 8h21v8H2z" fill="#f2f6fa" /><path d="M0 8l12.500 8L25 8v15H0z" fill="#29a3e8" /><path d="M12.500 16L25 8v15z" fill="#4cc0f5" /></svg>
          </TaskButton>
          <TaskButton $active>
            <svg width="24" height="24" viewBox="0 0 24 24"><circle cx="12" cy="12" r="12" fill="#2da84f" /><path d="M1.600 6A12 12 0 0 1 22.400 6H12a6 6 0 0 0-5.200 9z" fill="#e33b2e" /><path d="M22.400 6A12 12 0 0 1 11.500 24l5.700-9A6 6 0 0 0 12 6z" fill="#fcc934" /><circle cx="12" cy="12" r="5.600" fill="#fff" /><circle cx="12" cy="12" r="4.400" fill="#3f7de8" /></svg>
          </TaskButton>
          <TaskButton $running>
            <svg width="22" height="20" viewBox="0 0 22 20"><path d="M0 1h9l2 2h10v15H0z" fill="#f3cd6b" /><path d="M1 5h20v13H1z" fill="#ffe9a6" /><path d="M4 20v-8.500l1.500-1.500h10l2 1.500V20h-4v-5h-5v5z" fill="#39a5dc" /></svg>
          </TaskButton>
          <TaskButton>
            <svg width="21" height="22" viewBox="0 0 21 22"><path d="M0 10C1 4 5 .5 11 .5S21 5 21 10.500V13H7.500c.3 3 3 4.500 6 4.500 2.300 0 4.500-.6 6-1.500v4.500c-2 1-4.500 1.500-7 1.500-6 0-9.500-3.500-9.500-8.500 0-3.500 2-6 4.500-7.200C4 7 1.500 8 0 10zM7.500 9h7c0-2.500-1-4-3.300-4S7.800 6.700 7.500 9z" fill="#0b7bd8" fillRule="evenodd" /></svg>
          </TaskButton>
          <TaskButton>
            <svg width="22" height="23" viewBox="0 0 22 23" fill="#fff"><path d="M3 1c3-2 8-.5 8 3.500 0 2-2.500 3.500-2 5.500 1.500-2.500 5-2.500 6.500-4L18 4.500l.5 3.500c2 .8 3.300 3 3.500 5l-3.500.5c.5 1.500 2.500 2 3 5.500-1.500-1-2.500-1-3.500-.5.3 2-1 3.500-3 4.500H3.500c2-1 2-2.500.5-4-2-2-3.500-1.500-4-5 1.500 1 3 .8 4 .2C-.5 12.500-.5 9.500 1 8c1.300-1.200 3.500-1 4-2.500C5.500 4 4.500 3.500 3 4z" /><circle cx="11" cy="16.500" r="3.600" fill="none" stroke="#090909" strokeWidth="1.200" /><circle cx="11" cy="16.500" r="1.100" fill="#090909" /><path d="M13.500 8.500c1.500 1 3 1.200 4.500 1.200" fill="none" stroke="#090909" /></svg>
          </TaskButton>
          <TaskButton $running>
            <svg width="22" height="22" viewBox="0 0 22 22"><rect width="22" height="22" fill="#f3f6f9" /><g transform="translate(1 1)"><Tableau s={20} /></g></svg>
          </TaskButton>
          <TaskButton $running>
            <svg width="25" height="24" viewBox="0 0 25 24"><path d="M11 4C4 5 0 10 .5 15c.5 5 4 7 8 7 2.500 0 2-3 4-4 3-1.500 8 0 8.500-5 .5-6-4-10-10-9z" fill="#d7e7f2" /><circle cx="5.500" cy="12" r="2" fill="#e0503f" /><circle cx="9" cy="8.500" r="1.900" fill="#65b34a" /><circle cx="14" cy="7.500" r="1.900" fill="#f1b52c" /><circle cx="5.500" cy="17" r="1.800" fill="#3c7fd0" /><circle cx="10" cy="14" r="1.500" fill="#111" /><path d="M22 5l-5 17-3 2 1-4 5-16z" fill="#e08c35" /><path d="M18.500 1L24 0l-.5 3.500L21 6l-2-1z" fill="#c98d52" /></svg>
          </TaskButton>
        </Apps>
        <Tray>
          <TrayCell $w={42}>
            <Line s={17} stroke={1.700}><circle cx="16.500" cy="5.500" r="4" /><circle cx="7" cy="11" r="3.500" /><path d="M1 22c0-4.500 2.500-7 6-7s6 2.500 6 7M12 13c1.500-2 3-3 5-3 3 0 5.500 2.500 5.500 6.500" /></Line>
          </TrayCell>
          <TrayCell $w={30}><svg width="12" height="7" viewBox="0 0 12 7" fill="none" stroke="#fff" strokeWidth="1.200"><path d="M.5 6.500l5.500-5.500 5.500 5.500" /></svg></TrayCell>
          <TrayCell $w={18}><svg width="15" height="10" viewBox="0 0 15 10" fill="none" stroke="#fff" strokeWidth="1.200"><path d="M.6 .6h12v8.800H.6zM12.600 3.200h1.600v3.600h-1.600" /><path d="M2.500 2.500h4v5h-4z" fill="#fff" stroke="none" /></svg></TrayCell>
          <TrayCell $w={29}><svg width="17" height="14" viewBox="0 0 17 14" fill="none" stroke="#fff" strokeWidth="1.100"><path d="M.6 4.800h2.600L7 1.500v11L3.200 9.200H.6zM9 5c1 1.200 1 2.800 0 4M11.300 3.200c2 2.200 2 5.400 0 7.600M13.600 1.500c3 3.200 3 7.800 0 11" /></svg></TrayCell>
          <TrayCell $w={22}><svg width="14" height="14" viewBox="0 0 14 14" fill="none" stroke="#e8e2dd" strokeWidth="1.100"><path d="M.7 13.500C1 6.500 6 1.500 13 1.200M3.800 13.500C4 8.500 8 4.500 13 4.400M7 13.500c.2-3.200 2.600-5.700 6-5.900M10 13.500c.2-1.600 1.200-2.700 3-2.800" /><circle cx="12.500" cy="13" r="1.200" fill="#fff" stroke="none" /></svg></TrayCell>
          <TrayCell $w={35}>ENG</TrayCell>
          <Clock>23:54<br />12-10-2023</Clock>
          <Notifications>
            <svg width="16" height="16" viewBox="0 0 16 16"><path d="M0 0h16v12h-4l-3 3v-3H0z" fill="#fff" /><path d="M3 3.500h10M3 6h10M3 8.500h7" stroke="#2a1010" strokeWidth="1.100" /></svg>
            <Count>8</Count>
          </Notifications>
          <Peek />
        </Tray>
      </Taskbar>
    </Screen>
  );
}
